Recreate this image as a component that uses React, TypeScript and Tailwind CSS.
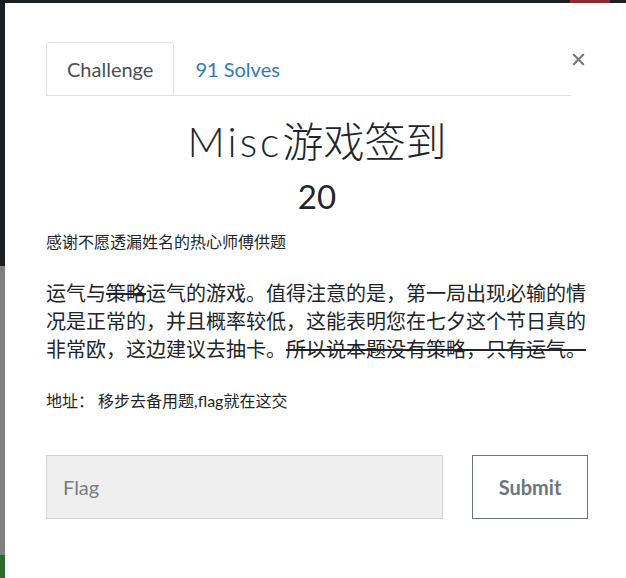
import { X } from 'lucide-react';

const cjk = "font-['Lato','Noto_Sans_CJK_SC',sans-serif]";

export default function App() {
  return (
    <div className={`flex flex-col w-[626px] h-[578px] overflow-hidden bg-white ${cjk}`}>
      {/* backdrop edge above the modal */}
      <div className="h-[3px] shrink-0 bg-[#1c2023] flex">
        <div className="flex-1" />
        <div className="w-[40px] bg-[#8a2a35]" />
        <div className="w-[16px]" />
      </div>

      <div className="flex flex-1 min-h-0">
        {/* backdrop edge left of the modal */}
        <div className="w-[5px] shrink-0 flex flex-col">
          <div className="h-[263px] bg-[#1c2023]" />
          <div className="h-[289px] bg-[#808080]" />
          <div className="flex-1 bg-[#2a6b2c]" />
        </div>

        <div className="flex-1 pl-[41px] pr-[38px] pt-[39px] text-[#212529]">
          {/* tabs + close */}
          <div className="flex">
            <div className="flex flex-1 border-b border-[#dee2e6]">
              <div className="h-[53px] px-[20px] flex items-center -mb-px bg-white border border-[#dee2e6] border-b-white rounded-t-[4px] text-[20px] text-[#495057]">
                Challenge
              </div>
              <div className="h-[53px] px-[21px] flex items-center text-[20px] text-[#337ab7]">
                91 Solves
              </div>
            </div>
            <div className="w-[17px] flex justify-center pt-[8px]">
              <X className="w-[19px] h-[19px] shrink-0 text-[#777777] -ml-[2px]" strokeWidth={2.6} />
            </div>
          </div>

          <h1 className="mt-[22px] text-center text-[41px] leading-[48px] font-light">
            <span className="tracking-[3px]">Misc</span>游戏签到
          </h1>
          <div className="mt-[10px] text-center text-[33px] leading-[40px]">20</div>

          <p className="mt-[14px] text-[16px] leading-[24px]">感谢不愿透漏姓名的热心师傅供题</p>

          <p className="mt-[25px] text-[20px] leading-[28px]">
            运气与<span className="line-through decoration-2">策略</span>运气的游戏。值得注意的是，第一局出现必输的情况是正常的，并且概率较低，这能表明您在七夕这个节日真的非常欧，这边建议去抽卡。
            <span className="line-through decoration-2">所以说本题没有策略，只有运气。</span>
          </p>

          <p className="mt-[26px] text-[16px] leading-[24px]">地址： 移步去备用题,flag就在这交</p>

          <div className="mt-[42px] flex gap-[29px]">
            <div className="w-[397px] h-[64px] bg-[#efefef] border border-[#ced4da] flex items-center pl-[16px] text-[20px] text-[#757d85]">
              Flag
            </div>
            <div className="w-[116px] h-[64px] border border-[#6c757d] flex items-center justify-center text-[20px] font-bold text-[#6c757d]">
              Submit
            </div>
          </div>
        </div>
      </div>
    </div>
  );
}
